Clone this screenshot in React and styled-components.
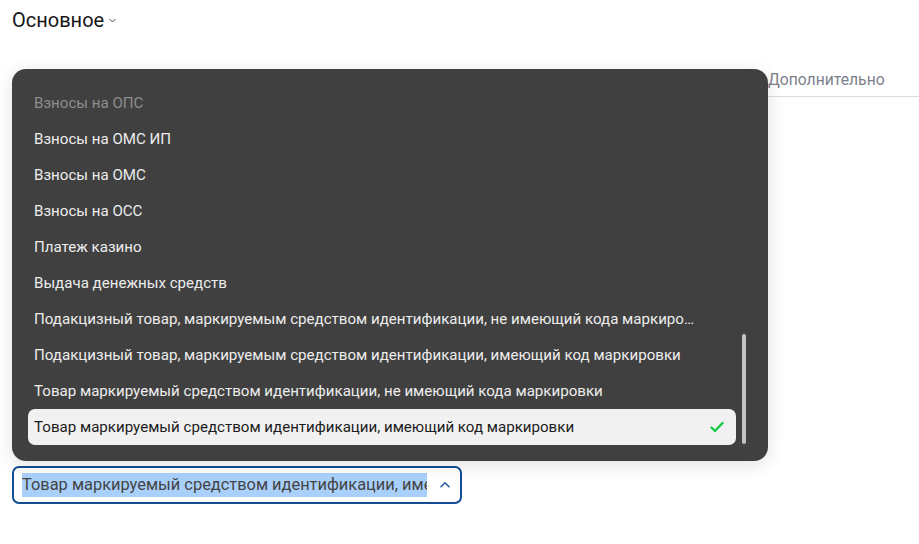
import React from 'react'
import styled, { createGlobalStyle } from 'styled-components'

const GlobalStyle = createGlobalStyle`
  body {
    margin: 0;
    background: #fff;
    font-family: Roboto, 'Noto Sans', sans-serif;
  }
`

const Page = styled.div`
  width: 919px;
  height: 544px;
  padding-left: 12px;
  box-sizing: border-box;
  overflow: hidden;
`

const Header = styled.div`
  height: 40px;
  display: flex;
  align-items: center;
  gap: 4px;
  font-size: 20px;
  color: #161616;
`

const Tabs = styled.div`
  margin-top: 22px;
  height: 34px;
  display: flex;
  justify-content: flex-end;
  align-items: center;
  border-bottom: 1px solid #dcdcdc;
`

const Tab = styled.div`
  width: 151px;
  font-size: 15.7px;
  color: #7c808c;
  padding-top: 1px;
`

const Body = styled.div`
  padding-top: 369px;
`

const SelectWrap = styled.div`
  position: relative;
  width: 450px;
`

const SelectBox = styled.div`
  height: 38px;
  box-sizing: border-box;
  border: 2px solid #144c93;
  border-radius: 7px;
  display: flex;
  align-items: center;
  padding: 0 9px 0 8px;
`

const SelectValue = styled.div`
  flex: 1;
  overflow: hidden;
  white-space: nowrap;
  font-size: 16.4px;
  color: #444;
  margin-right: 11px;
`

const Highlight = styled.span`
  display: inline-block;
  max-width: 405px;
  overflow: hidden;
  background: #a9d0fb;
  line-height: 24px;
  vertical-align: middle;
`

const Menu = styled.div`
  position: absolute;
  left: 0;
  bottom: calc(100% + 5px);
  width: 756px;
  box-sizing: border-box;
  background: #404040;
  border-radius: 14px;
  box-shadow: 0 4px 18px rgba(0, 0, 0, 0.12);
  display: flex;
  padding: 16px 22px 16px 16px;
`

const List = styled.div`
  flex: 1;
  display: flex;
  flex-direction: column;
  min-width: 0;
`

const Item = styled.div`
  height: 36px;
  display: flex;
  align-items: center;
  padding: 0 12px 0 6px;
  border-radius: 7px;
  font-size: 15.1px;
  color: ${({ $faded, $selected }) => $selected ? '#1c1c1c' : $faded ? '#8e8e8e' : '#ededed'};
  background: ${({ $selected }) => $selected ? '#f1f1f1' : 'transparent'};
`

const ItemText = styled.span`
  flex: 1;
  min-width: 0;
  white-space: nowrap;
  overflow: hidden;
  text-overflow: ellipsis;
  padding-right: 22px;
`

const Track = styled.div`
  width: 4px;
  margin-left: 6px;
  display: flex;
  flex-direction: column;
  justify-content: flex-end;
`

const Thumb = styled.div`
  height: 110px;
  margin-bottom: 1px;
  border-radius: 2px;
  background: #c4c4c4;
`

const Chevron = ({ up, size = 12, color = '#222', width = 1.6 }) => (
  <svg width={size} height={size} viewBox="0 0 12 12" fill="none">
    <path
      d={up ? 'M2 7.8 L6 3.8 L10 7.8' : 'M2.5 4.5 L6 8 L9.5 4.5'}
      stroke={color}
      strokeWidth={width}
      strokeLinecap="round"
      strokeLinejoin="round"
    />
  </svg>
)

const Check = () => (
  <svg width="14" height="14" viewBox="0 0 14 14" fill="none">
    <path d="M1.5 7.5 L5 11 L12.5 3" stroke="#19c746" strokeWidth="2.4" strokeLinecap="round" strokeLinejoin="round" />
  </svg>
)

const items = [
  'Взносы на ОПС',
  'Взносы на ОМС ИП',
  'Взносы на ОМС',
  'Взносы на ОСС',
  'Платеж казино',
  'Выдача денежных средств',
  'Подакцизный товар, маркируемым средством идентификации, не имеющий кода маркировки',
  'Подакцизный товар, маркируемым средством идентификации, имеющий код маркировки',
  'Товар маркируемый средством идентификации, не имеющий кода маркировки',
  'Товар маркируемый средством идентификации, имеющий код маркировки',
]

const selected = items.length - 1

export default function App() {
  return (
    <Page>
      <GlobalStyle />
      <Header>
        Основное
        <Chevron size={9} width={1.2} color="#333" />
      </Header>
      <Tabs>
        <Tab>Дополнительно</Tab>
      </Tabs>
      <Body>
        <SelectWrap>
          <Menu>
            <List>
              {items.map((text, i) => (
                <Item key={i} $faded={i === 0} $selected={i === selected}>
                  <ItemText>{text}</ItemText>
                  {i === selected && <Check />}
                </Item>
              ))}
            </List>
            <Track>
              <Thumb />
            </Track>
          </Menu>
          <SelectBox>
            <SelectValue>
              <Highlight>{items[selected]}</Highlight>
            </SelectValue>
            <Chevron up size={12} width={1.6} color="#2b5c9c" />
          </SelectBox>
        </SelectWrap>
      </Body>
    </Page>
  )
}
